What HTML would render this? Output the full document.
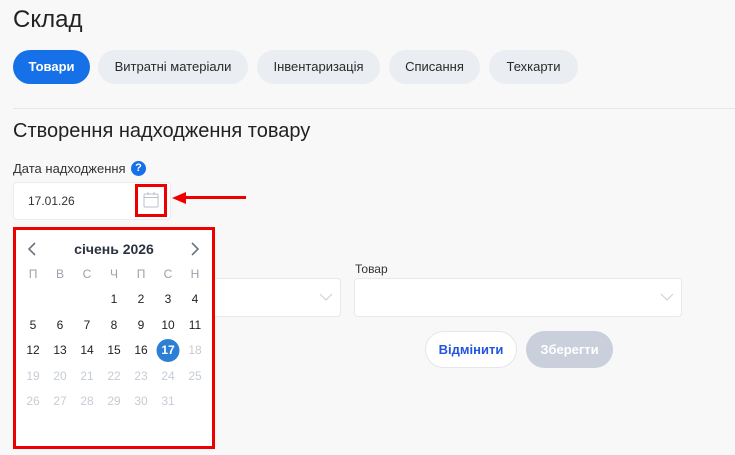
<!DOCTYPE html><html><head><meta charset="utf-8"><style>
*{box-sizing:border-box;margin:0;padding:0}
body{width:735px;height:455px;background:#f8f8f8;font-family:"Liberation Sans",sans-serif;position:relative;overflow:hidden;color:#222}
.a{position:absolute}
.tab{position:absolute;top:50px;height:34px;border-radius:17px;background:#eaedf1;font-size:13px;line-height:34px;text-align:center;color:#2a2a2a}
.sel{position:absolute;top:278px;height:39px;background:#fff;border:1px solid #e8e8e8;border-radius:4px}
.cal div{position:absolute;width:27px;text-align:center;font-size:12px;transform:translateX(-13.5px)}
.g{color:#c6ccd6}
.w{color:#9aa2ae}
</style></head><body>
<div class="a" style="left:13px;top:6px;font-size:24px;color:#222">Склад</div>
<div class="tab" style="left:13px;width:77px;background:#1670e8;color:#fff;font-weight:bold">Товари</div>
<div class="tab" style="left:98px;width:150px">Витратні матеріали</div>
<div class="tab" style="left:257px;width:123px">Інвентаризація</div>
<div class="tab" style="left:389px;width:91px">Списання</div>
<div class="tab" style="left:489px;width:89px">Техкарти</div>
<div class="a" style="left:13px;top:108px;width:722px;height:1px;background:#e6e6e6"></div>
<div class="a" style="left:13px;top:120px;font-size:20px;color:#222">Створення надходження товару</div>
<div class="a" style="left:13px;top:161px;font-size:13px;color:#333">Дата надходження</div>
<div class="a" style="left:131px;top:161px;width:15px;height:15px;border-radius:50%;background:#1670e8;color:#fff;font-size:11px;font-weight:bold;text-align:center;line-height:15px">?</div>
<div class="a" style="left:13px;top:182px;width:158px;height:38px;background:#fff;border:1px solid #ececec;border-radius:4px"></div>
<div class="a" style="left:28px;top:194px;font-size:12px;color:#333">17.01.26</div>
<div class="a" style="left:135px;top:184px;width:32px;height:33px;border:3px solid #e00"></div>
<svg class="a" style="left:143px;top:191px" width="16" height="17" viewBox="0 0 16 17"><rect x="1" y="3" width="14" height="13" rx="1" fill="none" stroke="#b8c0cc" stroke-width="1"/><line x1="1" y1="6.5" x2="15" y2="6.5" stroke="#b8c0cc"/><line x1="5" y1="1" x2="5" y2="4" stroke="#b8c0cc"/><line x1="11" y1="1" x2="11" y2="4" stroke="#b8c0cc"/></svg>
<div class="a" style="left:182px;top:196px;width:64px;height:3px;background:#e00"></div>
<svg class="a" style="left:170px;top:191px" width="16" height="14"><polygon points="2,7 16,1 16,13" fill="#e00"/></svg>
<div class="sel" style="left:200px;width:141px"></div>
<svg class="a" style="left:319px;top:293px" width="14" height="8"><polyline points="1,1 7,7 13,1" fill="none" stroke="#c8ced8"/></svg>
<div class="a" style="left:355px;top:262px;font-size:12px;color:#333">Товар</div>
<div class="sel" style="left:354px;width:328px"></div>
<svg class="a" style="left:660px;top:293px" width="14" height="8"><polyline points="1,1 7,7 13,1" fill="none" stroke="#c8ced8"/></svg>
<div class="a" style="left:425px;top:331px;width:92px;height:37px;border-radius:19px;background:#fff;border:1px solid #e6e6e6;color:#2255e0;font-size:13px;font-weight:bold;text-align:center;line-height:35px">Відмінити</div>
<div class="a" style="left:526px;top:331px;width:87px;height:37px;border-radius:19px;background:#c9d0dc;color:#fff;font-size:13px;font-weight:bold;text-align:center;line-height:37px">Зберегти</div>
<div class="a cal" style="left:13px;top:227px;width:202px;height:222px;background:#fff;border:3px solid #e00">
</div>
<div class="cal">
<svg class="a" style="left:27px;top:242px" width="10" height="14"><polyline points="8,1 2,7 8,13" fill="none" stroke="#6b7380" stroke-width="1.6"/></svg>
<svg class="a" style="left:190px;top:242px" width="10" height="14"><polyline points="2,1 8,7 2,13" fill="none" stroke="#6b7380" stroke-width="1.6"/></svg>
<div style="left:114px;top:241px;width:120px;font-size:14px;font-weight:bold;color:#2c3340;transform:translateX(-60px)">січень 2026</div>
<div class="w" style="left:33px;top:267px">П</div><div class="w" style="left:60px;top:267px">В</div><div class="w" style="left:87px;top:267px">С</div><div class="w" style="left:114px;top:267px">Ч</div><div class="w" style="left:141px;top:267px">П</div><div class="w" style="left:168px;top:267px">С</div><div class="w" style="left:195px;top:267px">Н</div>
<div style="left:114px;top:292px">1</div><div style="left:141px;top:292px">2</div><div style="left:168px;top:292px">3</div><div style="left:195px;top:292px">4</div>
<div style="left:33px;top:318px">5</div><div style="left:60px;top:318px">6</div><div style="left:87px;top:318px">7</div><div style="left:114px;top:318px">8</div><div style="left:141px;top:318px">9</div><div style="left:168px;top:318px">10</div><div style="left:195px;top:318px">11</div>
<div style="left:33px;top:343px">12</div><div style="left:60px;top:343px">13</div><div style="left:87px;top:343px">14</div><div style="left:114px;top:343px">15</div><div style="left:141px;top:343px">16</div>
<div style="left:168px;top:339px;width:23px;height:23px;border-radius:50%;background:#2d7fd6;color:#fff;font-weight:bold;line-height:23px;transform:translateX(-11.5px)">17</div>
<div class="g" style="left:195px;top:343px">18</div>
<div class="g" style="left:33px;top:369px">19</div><div class="g" style="left:60px;top:369px">20</div><div class="g" style="left:87px;top:369px">21</div><div class="g" style="left:114px;top:369px">22</div><div class="g" style="left:141px;top:369px">23</div><div class="g" style="left:168px;top:369px">24</div><div class="g" style="left:195px;top:369px">25</div>
<div class="g" style="left:33px;top:394px">26</div><div class="g" style="left:60px;top:394px">27</div><div class="g" style="left:87px;top:394px">28</div><div class="g" style="left:114px;top:394px">29</div><div class="g" style="left:141px;top:394px">30</div><div class="g" style="left:168px;top:394px">31</div>
</div>
</body></html>
